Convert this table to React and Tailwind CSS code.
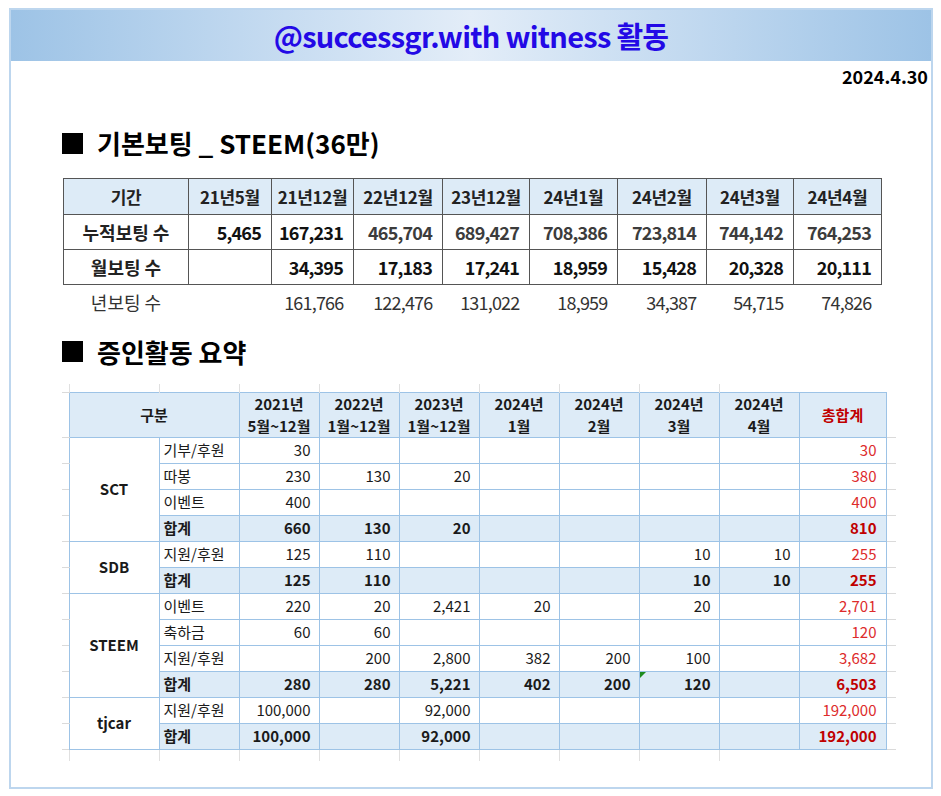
const T1_HEAD = ['기간', '21년5월', '21년12월', '22년12월', '23년12월', '24년1월', '24년2월', '24년3월', '24년4월'];
const T1_CUM = ['5,465', '167,231', '465,704', '689,427', '708,386', '723,814', '744,142', '764,253'];
const T1_MONTH = ['', '34,395', '17,183', '17,241', '18,959', '15,428', '20,328', '20,111'];
const T1_YEAR = ['', '161,766', '122,476', '131,022', '18,959', '34,387', '54,715', '74,826'];

const T2_HEAD = [
  ['2021년', '5월~12월'],
  ['2022년', '1월~12월'],
  ['2023년', '1월~12월'],
  ['2024년', '1월'],
  ['2024년', '2월'],
  ['2024년', '3월'],
  ['2024년', '4월'],
];

// label, [2021, 2022, 2023, 24.1, 24.2, 24.3, 24.4], total
const GROUPS = [
  {
    name: 'SCT',
    rows: [
      ['기부/후원', ['30', '', '', '', '', '', ''], '30'],
      ['따봉', ['230', '130', '20', '', '', '', ''], '380'],
      ['이벤트', ['400', '', '', '', '', '', ''], '400'],
      ['합계', ['660', '130', '20', '', '', '', ''], '810'],
    ],
  },
  {
    name: 'SDB',
    rows: [
      ['지원/후원', ['125', '110', '', '', '', '10', '10'], '255'],
      ['합계', ['125', '110', '', '', '', '10', '10'], '255'],
    ],
  },
  {
    name: 'STEEM',
    rows: [
      ['이벤트', ['220', '20', '2,421', '20', '', '20', ''], '2,701'],
      ['축하금', ['60', '60', '', '', '', '', ''], '120'],
      ['지원/후원', ['', '200', '2,800', '382', '200', '100', ''], '3,682'],
      ['합계', ['280', '280', '5,221', '402', '200', '120', ''], '6,503'],
    ],
  },
  {
    name: 'tjcar',
    rows: [
      ['지원/후원', ['100,000', '', '92,000', '', '', '', ''], '192,000'],
      ['합계', ['100,000', '', '92,000', '', '', '', ''], '192,000'],
    ],
  },
];

const Heading = ({ children }) => (
  <div className="flex items-center h-[30px] ml-[51px] text-[26px] font-bold text-black leading-none">
    <span className="inline-block w-[21px] h-[21px] bg-black mr-[14px]" />
    <span>{children}</span>
  </div>
);

const VotingTable = () => (
  <div className="ml-[52px] mt-[20px]">
    <table className="table-fixed border-collapse w-[818px] text-[#222]">
      <colgroup>
        <col className="w-[125px]" />
        <col className="w-[83px]" />
        <col className="w-[82px]" />
        <col className="w-[89px]" />
        <col className="w-[87px]" />
        <col className="w-[88px]" />
        <col className="w-[89px]" />
        <col className="w-[87px]" />
        <col className="w-[88px]" />
      </colgroup>
      <tbody>
        <tr className="h-[36px] bg-[#ddebf7]">
          {T1_HEAD.map((h) => (
            <th key={h} className="border border-[#555] text-[17px] font-bold text-center p-0 tracking-[-0.3px]">
              {h}
            </th>
          ))}
        </tr>
        <tr className="h-[35px]">
          <td className="border border-[#555] text-[18px] font-bold text-center">누적보팅 수</td>
          {T1_CUM.map((v, i) => (
            <td
              key={i}
              className={`border border-[#555] text-[18px] tracking-[-0.8px] font-bold text-right pr-[10px] ${i < 2 ? 'text-[#111]' : 'text-[#3c3c3c]'}`}
            >
              {v}
            </td>
          ))}
        </tr>
        <tr className="h-[35px]">
          <td className="border border-[#555] text-[18px] font-bold text-center">월보팅 수</td>
          {T1_MONTH.map((v, i) => (
            <td key={i} className="border border-[#555] text-[18px] tracking-[-0.8px] font-bold text-right pr-[10px] text-[#111]">
              {v}
            </td>
          ))}
        </tr>
        <tr className="h-[35px] text-[#333]">
          <td className="text-[18px] text-center">년보팅 수</td>
          {T1_YEAR.map((v, i) => (
            <td key={i} className="text-[18px] tracking-[-0.8px] text-right pr-[10px]">
              {v}
            </td>
          ))}
        </tr>
      </tbody>
    </table>
  </div>
);

const BLUE = 'border border-[#9dc3e6]';

const SummaryTable = () => (
  <div className="ml-[51px] mt-[17px]">
    <table className="table-fixed border-collapse w-[834px] text-[15px] text-[#1a1a1a]">
      <colgroup>
        <col className="w-[7px]" />
        <col className="w-[90px]" />
        <col className="w-[80px]" />
        <col className="w-[80px]" />
        <col className="w-[80px]" />
        <col className="w-[80px]" />
        <col className="w-[80px]" />
        <col className="w-[80px]" />
        <col className="w-[80px]" />
        <col className="w-[80px]" />
        <col className="w-[87px]" />
        <col className="w-[10px]" />
      </colgroup>
      <tbody>
        {/* excel gridline stubs above */}
        <tr className="h-[9px]">
          <td className="p-0 border-b border-b-[#dadada]" />
          {[0, 1, 2, 3, 4, 5, 6, 7, 8].map((i) => (
            <td key={i} className="p-0 border-l border-l-[#e0e0e0]" />
          ))}
          <td className="p-0" />
          <td className="p-0" />
        </tr>
        <tr className="h-[45px] leading-[22px]">
          <td className="p-0 border-b border-b-[#dadada]" />
          <th colSpan={2} className={`${BLUE} bg-[#ddebf7] font-bold text-center p-0`}>
            구분
          </th>
          {T2_HEAD.map(([a, b], i) => (
            <th key={i} className={`${BLUE} bg-[#ddebf7] font-bold text-center p-0`}>
              {a}
              <br />
              {b}
            </th>
          ))}
          <th className={`${BLUE} bg-[#ddebf7] font-bold text-center p-0 text-[#c00000]`}>총합계</th>
          <td className="p-0 border-b border-b-[#dadada]" />
        </tr>
        {GROUPS.map((g) =>
          g.rows.map(([label, vals, total], ri) => {
            const isSum = label === '합계';
            return (
              <tr key={g.name + ri} className="h-[26px]">
                <td className="p-0 border-b border-b-[#dadada]" />
                {ri === 0 && (
                  <td rowSpan={g.rows.length} className={`${BLUE} bg-white font-bold text-center p-0`}>
                    {g.name}
                  </td>
                )}
                <td className={`${BLUE} text-left pl-[4px] py-0 ${isSum ? 'bg-[#ddebf7] font-bold' : 'bg-white'}`}>
                  {label}
                </td>
                {vals.map((v, j) => (
                  <td
                    key={j}
                    className={`${BLUE} relative text-right pr-[8px] py-0 ${isSum ? 'bg-[#ddebf7] font-bold' : 'bg-white'}`}
                  >
                    {g.name === 'STEEM' && isSum && j === 5 && (
                      <span className="absolute left-0 top-0 w-0 h-0 border-t-[6px] border-r-[6px] border-t-[#1e8c1e] border-r-transparent" />
                    )}
                    {v}
                  </td>
                ))}
                <td
                  className={`${BLUE} text-right pr-[9px] py-0 ${isSum ? 'bg-[#ddebf7] font-bold text-[#c00000]' : 'bg-white text-[#dd2b2b]'}`}
                >
                  {total}
                </td>
                <td className="p-0 border-b border-b-[#dadada]" />
              </tr>
            );
          })
        )}
        {/* excel gridline stubs below */}
        <tr className="h-[11px]">
          <td className="p-0" />
          {[0, 1, 2, 3, 4, 5, 6, 7, 8].map((i) => (
            <td key={i} className="p-0 border-l border-l-[#e0e0e0]" />
          ))}
          <td className="p-0" />
          <td className="p-0" />
        </tr>
      </tbody>
    </table>
  </div>
);

export default function App() {
  return (
    <div className="w-[941px] h-[796px] bg-white pt-[8px] pl-[9px] font-['Noto_Sans_CJK_KR','Noto_Sans',sans-serif]">
      <div className="w-[924px] h-[781px] border-2 border-[#bdd6ee] flex flex-col">
        {/* title band */}
        <div className="h-[51px] shrink-0 bg-linear-to-r from-[#9dc3e6] via-[#e3edf8] to-[#9dc3e6] flex items-center justify-center">
          <h1 className="text-[29px] font-bold text-[#2309e6] leading-none tracking-tight">
            @successgr.with witness 활동
          </h1>
        </div>
        <div className="flex-1 bg-white">
          <div className="text-right pr-[3px] pt-[5px] text-[18px] leading-[20px] font-bold text-black">
            2024.4.30
          </div>
          <div className="mt-[42px]">
            <Heading>기본보팅 _ STEEM(36만)</Heading>
          </div>
          <VotingTable />
          <div className="mt-[17px]">
            <Heading>증인활동 요약</Heading>
          </div>
          <SummaryTable />
        </div>
      </div>
    </div>
  );
}
